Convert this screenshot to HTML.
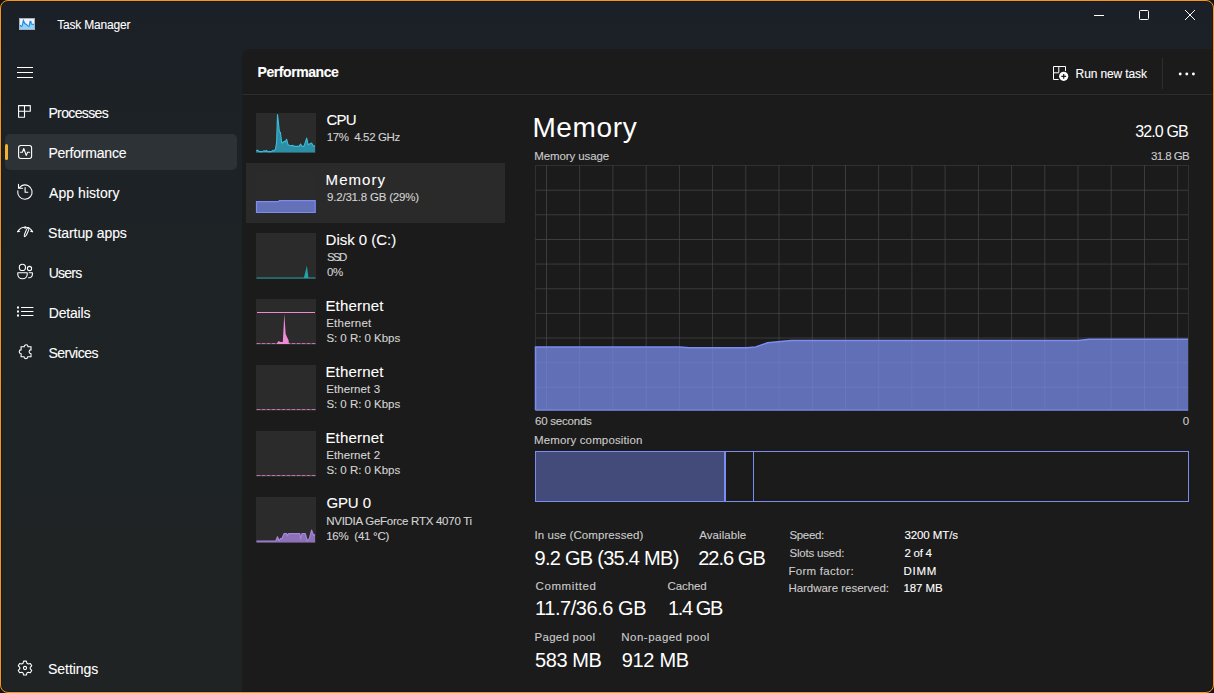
<!DOCTYPE html>
<html><head><meta charset="utf-8">
<style>
html,body{margin:0;padding:0;width:1214px;height:693px;overflow:hidden;background:#141414;}
*{box-sizing:border-box;}
body{font-family:"Liberation Sans",sans-serif;color:#fff;position:relative;}
.abs{position:absolute;}
.t{position:absolute;white-space:nowrap;line-height:1;-webkit-text-stroke:0.1px currentColor;}
svg{position:absolute;left:0;top:0;}
</style></head><body>
<div class="abs" style="left:0;top:0;width:1214px;height:693px;background:linear-gradient(180deg,#1b2028 0%,#1c2127 8%,#1d2226 20%,#1e2325 60%,#1f2324 100%);border-radius:8px;overflow:hidden">
  <div class="abs" style="left:242px;top:49px;width:972px;height:644px;background:#1b1b1b;border-top-left-radius:8px"></div>
</div>
<!-- sidebar selection -->
<div class="abs" style="left:5px;top:134px;width:232px;height:36px;background:#2d3236;border-radius:5px"></div>
<div class="abs" style="left:5px;top:144px;width:3px;height:16px;background:#f1b22f;border-radius:1.5px"></div>
<!-- header separator -->
<div class="abs" style="left:242px;top:94px;width:972px;height:1px;background:#2b2e31"></div>
<div class="abs" style="left:1162px;top:58px;width:1px;height:31px;background:#2e2e2e"></div>
<!-- perf list selected -->
<div class="abs" style="left:246px;top:163px;width:259px;height:60px;background:#2a2a2a"></div>
<!-- thumbs -->
<div class="abs" style="left:256px;top:113px;width:60px;height:40px;background:#2b2b2b"></div>
<div class="abs" style="left:256px;top:173px;width:60px;height:40px;background:#2b2b2b"></div>
<div class="abs" style="left:256px;top:233px;width:60px;height:46px;background:#2b2b2b"></div>
<div class="abs" style="left:256px;top:299px;width:60px;height:46px;background:#2b2b2b"></div>
<div class="abs" style="left:256px;top:365px;width:60px;height:46px;background:#2b2b2b"></div>
<div class="abs" style="left:256px;top:431px;width:60px;height:46px;background:#2b2b2b"></div>
<div class="abs" style="left:256px;top:497px;width:60px;height:46px;background:#2b2b2b"></div>

<svg width="1214" height="693" viewBox="0 0 1214 693">
  <!-- thumbs graphs -->
  <polygon points="256.2,152.5 256.2,150.6 257.5,150.3 259.6,151.6 262.4,151.6 264.1,150.6 265.5,151.5 266.5,150.5 267.9,151.6 271.4,151.6 272.8,150.3 273.8,151.2 275.5,149.2 276.6,142.6 277.5,114.6 278.7,125.3 279.4,131.9 280.4,132.2 281.8,143.3 284.5,141.2 285.2,141.9 286.6,139.2 288.0,144.7 290.8,145.7 292.9,145.4 294.9,146.4 299.1,146.4 300.5,144.0 301.9,146.1 303.9,146.4 306.7,138.1 308.1,144.7 311.6,143.0 313.3,146.1 315.0,145.7 315.0,152.5" fill="#2c8fa6"/><polyline points="256.2,150.6 257.5,150.3 259.6,151.6 262.4,151.6 264.1,150.6 265.5,151.5 266.5,150.5 267.9,151.6 271.4,151.6 272.8,150.3 273.8,151.2 275.5,149.2 276.6,142.6 277.5,114.6 278.7,125.3 279.4,131.9 280.4,132.2 281.8,143.3 284.5,141.2 285.2,141.9 286.6,139.2 288.0,144.7 290.8,145.7 292.9,145.4 294.9,146.4 299.1,146.4 300.5,144.0 301.9,146.1 303.9,146.4 306.7,138.1 308.1,144.7 311.6,143.0 313.3,146.1 315.0,145.7" fill="none" stroke="#3bbcd9" stroke-width="1.1" stroke-linejoin="round"/>
  <polygon points="256.5,212.5 256.5,201.7 278.3,201.7 279.3,200.7 315.2,200.7 315.2,212.5" fill="#6470b8" stroke="#7b8df2" stroke-width="1.2"/>
  <line x1="256.5" y1="278" x2="315.5" y2="278" stroke="#23a3a8" stroke-width="1"/>
  <polygon points="303.8,278 306.9,265.8 308.5,278" fill="#23a3a8"/>
  <line x1="257" y1="312.5" x2="315" y2="312.5" stroke="#ef8ad6" stroke-width="1.2"/>
  <line x1="256.5" y1="343.5" x2="315.5" y2="343.5" stroke="#ef8ad6" stroke-width="1" stroke-dasharray="4 1" opacity="0.75"/>
  <polygon points="276.5,344 278.5,341 280.5,342 282.8,342 284.3,313.9 285.7,334 287.2,337.6 288.5,340 289,344" fill="#ef8ad6"/>
  <line x1="256.5" y1="409.5" x2="315.5" y2="409.5" stroke="#ef8ad6" stroke-width="1" stroke-dasharray="4 1" opacity="0.75"/>
  <line x1="256.5" y1="475.5" x2="315.5" y2="475.5" stroke="#ef8ad6" stroke-width="1" stroke-dasharray="4 1" opacity="0.75"/>
  <polygon points="256.5,542.5 256.5,541.0 275.8,541.0 277.5,536.8 279.0,541.0 280.5,538.7 281.8,538.7 284.0,533.7 286.7,533.7 287.5,536.0 288.5,533.7 299.9,533.7 300.6,539.0 302.0,533.7 305.3,533.7 307.3,541.0 309.5,538.0 311.6,530.2 313.6,535.5 315.0,534.5 315.0,542.5" fill="#8d70b8"/><polyline points="256.5,541.0 275.8,541.0 277.5,536.8 279.0,541.0 280.5,538.7 281.8,538.7 284.0,533.7 286.7,533.7 287.5,536.0 288.5,533.7 299.9,533.7 300.6,539.0 302.0,533.7 305.3,533.7 307.3,541.0 309.5,538.0 311.6,530.2 313.6,535.5 315.0,534.5" fill="none" stroke="#a485d8" stroke-width="1.2" stroke-linejoin="round"/>

  <!-- main graph -->
  <g stroke="#303030" stroke-width="1"><line x1="546.5" y1="165" x2="546.5" y2="410" /><line x1="579.7" y1="165" x2="579.7" y2="410" /><line x1="612.9" y1="165" x2="612.9" y2="410" /><line x1="646.2" y1="165" x2="646.2" y2="410" /><line x1="679.4" y1="165" x2="679.4" y2="410" /><line x1="712.6" y1="165" x2="712.6" y2="410" /><line x1="745.8" y1="165" x2="745.8" y2="410" /><line x1="779.0" y1="165" x2="779.0" y2="410" /><line x1="812.3" y1="165" x2="812.3" y2="410" /><line x1="845.5" y1="165" x2="845.5" y2="410" /><line x1="878.7" y1="165" x2="878.7" y2="410" /><line x1="911.9" y1="165" x2="911.9" y2="410" /><line x1="945.1" y1="165" x2="945.1" y2="410" /><line x1="978.4" y1="165" x2="978.4" y2="410" /><line x1="1011.6" y1="165" x2="1011.6" y2="410" /><line x1="1044.8" y1="165" x2="1044.8" y2="410" /><line x1="1078.0" y1="165" x2="1078.0" y2="410" /><line x1="1111.2" y1="165" x2="1111.2" y2="410" /><line x1="1144.5" y1="165" x2="1144.5" y2="410" /><line x1="1177.7" y1="165" x2="1177.7" y2="410" /><line x1="535" y1="190.2" x2="1188" y2="190.2" /><line x1="535" y1="214.8" x2="1188" y2="214.8" /><line x1="535" y1="239.5" x2="1188" y2="239.5" /><line x1="535" y1="264.1" x2="1188" y2="264.1" /><line x1="535" y1="288.8" x2="1188" y2="288.8" /><line x1="535" y1="313.4" x2="1188" y2="313.4" /><line x1="535" y1="338.0" x2="1188" y2="338.0" /><line x1="535" y1="362.7" x2="1188" y2="362.7" /><line x1="535" y1="387.3" x2="1188" y2="387.3" /></g>
  <rect x="535.5" y="165.5" width="653" height="245" fill="none" stroke="#303030" stroke-width="1"/>
  <polygon points="535.5,410.5 535.5,346.9 679.3,346.9 689.0,347.7 746.8,347.7 755.7,347.0 767.5,342.8 791.2,340.5 1078.2,340.5 1088.8,339.2 1188.0,339.2 1188,410.5" fill="#616fb6"/>
  <g stroke="#ffffff" stroke-opacity="0.06" stroke-width="1"><line x1="546.5" y1="165" x2="546.5" y2="410" /><line x1="579.7" y1="165" x2="579.7" y2="410" /><line x1="612.9" y1="165" x2="612.9" y2="410" /><line x1="646.2" y1="165" x2="646.2" y2="410" /><line x1="679.4" y1="165" x2="679.4" y2="410" /><line x1="712.6" y1="165" x2="712.6" y2="410" /><line x1="745.8" y1="165" x2="745.8" y2="410" /><line x1="779.0" y1="165" x2="779.0" y2="410" /><line x1="812.3" y1="165" x2="812.3" y2="410" /><line x1="845.5" y1="165" x2="845.5" y2="410" /><line x1="878.7" y1="165" x2="878.7" y2="410" /><line x1="911.9" y1="165" x2="911.9" y2="410" /><line x1="945.1" y1="165" x2="945.1" y2="410" /><line x1="978.4" y1="165" x2="978.4" y2="410" /><line x1="1011.6" y1="165" x2="1011.6" y2="410" /><line x1="1044.8" y1="165" x2="1044.8" y2="410" /><line x1="1078.0" y1="165" x2="1078.0" y2="410" /><line x1="1111.2" y1="165" x2="1111.2" y2="410" /><line x1="1144.5" y1="165" x2="1144.5" y2="410" /><line x1="1177.7" y1="165" x2="1177.7" y2="410" /><line x1="535" y1="190.2" x2="1188" y2="190.2" /><line x1="535" y1="214.8" x2="1188" y2="214.8" /><line x1="535" y1="239.5" x2="1188" y2="239.5" /><line x1="535" y1="264.1" x2="1188" y2="264.1" /><line x1="535" y1="288.8" x2="1188" y2="288.8" /><line x1="535" y1="313.4" x2="1188" y2="313.4" /><line x1="535" y1="338.0" x2="1188" y2="338.0" /><line x1="535" y1="362.7" x2="1188" y2="362.7" /><line x1="535" y1="387.3" x2="1188" y2="387.3" /></g>
  <polyline points="535.5,410 535.5,346.9 679.3,346.9 689.0,347.7 746.8,347.7 755.7,347.0 767.5,342.8 791.2,340.5 1078.2,340.5 1088.8,339.2 1188.0,339.2" fill="none" stroke="#7b8df2" stroke-width="1.5"/>
  <line x1="535.5" y1="410" x2="1188" y2="410" stroke="#7b8df2" stroke-width="1.2"/>

  <!-- composition -->
  <rect x="535.5" y="451.5" width="653" height="50" fill="none" stroke="#7b8df2" stroke-width="1"/>
  <rect x="536" y="452" width="188" height="49" fill="#434b7a"/>
  <line x1="725" y1="451.5" x2="725" y2="501.5" stroke="#7b8df2" stroke-width="2"/>
  <line x1="753.5" y1="451.5" x2="753.5" y2="501.5" stroke="#7b8df2" stroke-width="1"/>

  <!-- title icon -->
  <rect x="19.5" y="18.5" width="15" height="11" fill="#eef2f7" stroke="#a9b2bb" stroke-width="1"/>
  <polygon points="20,29 20,25.2 21.2,26.4 22.1,26.1 23.4,20.5 24.8,23.5 26.5,24.4 28,26.1 29.1,26.3 30.1,21.4 30.9,21.5 31.3,24.1 34,24.4 34,29" fill="#8fd3fb"/>
  <polyline points="20,25.2 21.2,26.4 22.1,26.1 23.4,20.5 24.8,23.5 26.5,24.4 28,26.1 29.1,26.3 30.1,21.4 30.9,21.5 31.3,24.1 34,24.4" fill="none" stroke="#1c86de" stroke-width="1.1"/>

  <!-- window controls -->
  <line x1="1094" y1="15.5" x2="1104" y2="15.5" stroke="#fff" stroke-width="1"/>
  <rect x="1139.5" y="10.5" width="9" height="9" rx="1" fill="none" stroke="#fff" stroke-width="1"/>
  <path d="M1185 10 L1195 20 M1195 10 L1185 20" stroke="#fff" stroke-width="1"/>

  <!-- hamburger -->
  <path d="M17 67.5 H33 M17 72.5 H33 M17 77.5 H33" stroke="#fff" stroke-width="1"/>

  <g fill="none" stroke="#fff" stroke-width="1.1" stroke-linejoin="round" stroke-linecap="round">
    <!-- processes -->
    <path d="M18.6 105.6 H30.3 V111.3 H18.6 M18.6 105.6 V117.2 H24.5 V105.6"/>
    <!-- performance -->
    <rect x="18.6" y="145.5" width="13" height="13" rx="2.2"/>
    <path d="M20.5 152.3 H22.4 L23.8 148.5 L26.2 155.4 L27.6 152.3 H29.6"/>
    <!-- app history -->
    <path d="M17.8 190.85 A7.2 7.2 0 1 0 22.2 185.4"/>
    <path stroke-linejoin="miter" d="M18.5 184.4 V188.3 H22.6 M18.7 188.1 L22.4 185.3"/>
    <path d="M25.1 187.6 V192.3 H27.8"/>
    <!-- startup apps -->
    <path d="M17.6 231.8 A8.4 8.4 0 0 1 32.6 231.8"/>
    <path d="M17.8 231.6 L19.6 231.2 M32.4 231.6 L30.6 231.2 M25.1 226.6 V228.6"/>
    <ellipse cx="26.6" cy="232.1" rx="1.1" ry="4.9" transform="rotate(24 26.6 232.1)"/>
    <!-- users -->
    <circle cx="22.4" cy="267.4" r="3.1"/>
    <circle cx="29.5" cy="268.5" r="2.1"/>
    <path d="M17.8 272.8 H27.2 V274.5 A4.7 4.2 0 0 1 17.8 274.5 Z"/>
    <path d="M29.2 272.8 H32.4 V274.5 A3.6 3.6 0 0 1 28.6 277.8"/>
    <!-- details -->
    <path d="M21.5 307.5 H33 M21.5 311.5 H33 M21.5 315.5 H33"/>
    <!-- services -->
    <path stroke-linejoin="miter" stroke-linecap="butt" d="M21.1 346.7 H24.2 A1.9 1.9 0 0 1 28 346.7 H31 V349.9 A1.9 1.9 0 0 0 31 353.7 V356.7 H27.8 A1.9 1.9 0 0 1 24 356.7 H21.1 V353.7 A1.9 1.9 0 0 1 21.1 349.9 Z"/>
    <!-- settings -->
    <path d="M23.10 663.15 L23.65 661.13 L26.35 661.13 L26.90 663.15 L28.34 663.98 L30.36 663.44 L31.71 665.79 L30.23 667.27 L30.23 668.93 L31.71 670.41 L30.36 672.76 L28.34 672.22 L26.90 673.05 L26.35 675.07 L23.65 675.07 L23.10 673.05 L21.66 672.22 L19.64 672.76 L18.29 670.41 L19.77 668.93 L19.77 667.27 L18.29 665.79 L19.64 663.44 L21.66 663.98 Z"/>
    <circle cx="25" cy="668" r="1.6"/>
  </g>
  <g fill="#fff">
    <rect x="17" y="306.5" width="2" height="2"/><rect x="17" y="310.5" width="2" height="2"/><rect x="17" y="314.5" width="2" height="2"/>
    <circle cx="1180.2" cy="74" r="1.45"/><circle cx="1186.8" cy="74" r="1.45"/><circle cx="1193.4" cy="74" r="1.45"/>
  </g>
  <!-- run new task icon -->
  <g fill="none" stroke="#fff" stroke-width="1">
    <path d="M1053.5 66.5 H1065.5 V71.3 M1053.5 66.5 V79.5 H1058.6 M1053.5 72.8 H1058.8 M1058.8 66.5 V72.8"/>
  </g>
  <circle cx="1063.7" cy="76.3" r="5.6" fill="#1b1b1b"/><circle cx="1063.7" cy="76.3" r="4.6" fill="#fff"/>
  <path d="M1063.7 73.9 V78.7 M1061.3 76.3 H1066.1" stroke="#1b1b1b" stroke-width="1.2"/>
</svg>
<div class="t" style="left:57.3px;top:19.0px;font-size:12px;letter-spacing:-0.2px;color:#ffffff;">Task Manager</div>
<div class="t" style="left:48.4px;top:106.0px;font-size:14px;letter-spacing:-0.625px;color:#ffffff;">Processes</div>
<div class="t" style="left:48.4px;top:146.0px;font-size:14px;letter-spacing:-0.2px;color:#ffffff;">Performance</div>
<div class="t" style="left:49.1px;top:186.0px;font-size:14px;letter-spacing:0.04px;color:#ffffff;">App history</div>
<div class="t" style="left:48.1px;top:226.0px;font-size:14px;letter-spacing:-0.055px;color:#ffffff;">Startup apps</div>
<div class="t" style="left:48.7px;top:266.0px;font-size:14px;letter-spacing:-0.75px;color:#ffffff;">Users</div>
<div class="t" style="left:48.7px;top:306.0px;font-size:14px;letter-spacing:-0.167px;color:#ffffff;">Details</div>
<div class="t" style="left:48.5px;top:346.0px;font-size:14px;letter-spacing:-0.543px;color:#ffffff;">Services</div>
<div class="t" style="left:48.1px;top:662.0px;font-size:14px;letter-spacing:-0.057px;color:#ffffff;">Settings</div>
<div class="t" style="left:257.6px;top:65.0px;font-size:14px;letter-spacing:-0.44px;color:#ffffff;font-weight:700;">Performance</div>
<div class="t" style="left:1075.6px;top:68.0px;font-size:12px;letter-spacing:-0.127px;color:#ffffff;">Run new task</div>
<div class="t" style="left:326.6px;top:112.0px;font-size:15px;letter-spacing:-0.9px;color:#ffffff;">CPU</div>
<div class="t" style="left:326.8px;top:132.0px;font-size:11.5px;letter-spacing:-0.383px;color:#d4d4d4;">17%  4.52 GHz</div>
<div class="t" style="left:325.6px;top:172.0px;font-size:15px;letter-spacing:1.04px;color:#ffffff;">Memory</div>
<div class="t" style="left:327.0px;top:192.0px;font-size:11.5px;letter-spacing:-0.2px;color:#d4d4d4;">9.2/31.8 GB (29%)</div>
<div class="t" style="left:325.6px;top:232.0px;font-size:15px;letter-spacing:-0.02px;color:#ffffff;">Disk 0 (C:)</div>
<div class="t" style="left:327.0px;top:252.0px;font-size:11.5px;letter-spacing:-1.7px;color:#d4d4d4;">SSD</div>
<div class="t" style="left:327.0px;top:267.0px;font-size:11.5px;letter-spacing:-0.4px;color:#d4d4d4;">0%</div>
<div class="t" style="left:325.4px;top:298.0px;font-size:15px;letter-spacing:0.2px;color:#ffffff;">Ethernet</div>
<div class="t" style="left:326.2px;top:318.0px;font-size:11.5px;letter-spacing:0.229px;color:#d4d4d4;">Ethernet</div>
<div class="t" style="left:326.4px;top:333.0px;font-size:11.5px;letter-spacing:-0.031px;color:#d4d4d4;">S: 0 R: 0 Kbps</div>
<div class="t" style="left:325.4px;top:364.0px;font-size:15px;letter-spacing:0.2px;color:#ffffff;">Ethernet</div>
<div class="t" style="left:326.2px;top:384.0px;font-size:11.5px;letter-spacing:0.089px;color:#d4d4d4;">Ethernet 3</div>
<div class="t" style="left:326.4px;top:399.0px;font-size:11.5px;letter-spacing:-0.031px;color:#d4d4d4;">S: 0 R: 0 Kbps</div>
<div class="t" style="left:325.4px;top:430.0px;font-size:15px;letter-spacing:0.2px;color:#ffffff;">Ethernet</div>
<div class="t" style="left:326.2px;top:450.0px;font-size:11.5px;letter-spacing:0.089px;color:#d4d4d4;">Ethernet 2</div>
<div class="t" style="left:326.4px;top:465.0px;font-size:11.5px;letter-spacing:-0.031px;color:#d4d4d4;">S: 0 R: 0 Kbps</div>
<div class="t" style="left:326.4px;top:495.0px;font-size:15px;letter-spacing:-0.1px;color:#ffffff;">GPU 0</div>
<div class="t" style="left:326.2px;top:516.0px;font-size:11.5px;letter-spacing:-0.264px;color:#d4d4d4;">NVIDIA GeForce RTX 4070 Ti</div>
<div class="t" style="left:326.2px;top:531.0px;font-size:11.5px;letter-spacing:-0.255px;color:#d4d4d4;">16%  (41 °C)</div>
<div class="t" style="left:532.4px;top:114.0px;font-size:28px;letter-spacing:0.64px;color:#ffffff;-webkit-text-stroke:0;">Memory</div>
<div class="t" style="left:1135.3px;top:124.0px;font-size:16px;letter-spacing:-0.9px;color:#ffffff;-webkit-text-stroke:0;">32.0 GB</div>
<div class="t" style="left:534.3px;top:151.0px;font-size:11.5px;letter-spacing:-0.109px;color:#cccccc;">Memory usage</div>
<div class="t" style="left:1151.0px;top:151.0px;font-size:11.5px;letter-spacing:-0.567px;color:#cccccc;">31.8 GB</div>
<div class="t" style="left:535.0px;top:416.4px;font-size:11.5px;letter-spacing:-0.222px;color:#cccccc;">60 seconds</div>
<div class="t" style="left:1182.8px;top:416.4px;font-size:11.5px;letter-spacing:-0.8px;color:#cccccc;">0</div>
<div class="t" style="left:534.0px;top:435.4px;font-size:11.5px;letter-spacing:0.141px;color:#cccccc;">Memory composition</div>
<div class="t" style="left:534.5px;top:530.0px;font-size:11.5px;letter-spacing:0.078px;color:#cccccc;">In use (Compressed)</div>
<div class="t" style="left:534.5px;top:548.0px;font-size:20px;letter-spacing:-0.72px;color:#ffffff;-webkit-text-stroke:0;">9.2 GB (35.4 MB)</div>
<div class="t" style="left:699.2px;top:530.0px;font-size:11.5px;letter-spacing:0.075px;color:#cccccc;">Available</div>
<div class="t" style="left:698.2px;top:548.0px;font-size:20px;letter-spacing:-0.967px;color:#ffffff;-webkit-text-stroke:0;">22.6 GB</div>
<div class="t" style="left:535.6px;top:581.0px;font-size:11.5px;letter-spacing:0.575px;color:#cccccc;">Committed</div>
<div class="t" style="left:535.0px;top:598.0px;font-size:20px;letter-spacing:-0.436px;color:#ffffff;-webkit-text-stroke:0;">11.7/36.6 GB</div>
<div class="t" style="left:667.6px;top:581.0px;font-size:11.5px;letter-spacing:-0.12px;color:#cccccc;">Cached</div>
<div class="t" style="left:668.0px;top:598.0px;font-size:20px;letter-spacing:-1.4px;color:#ffffff;-webkit-text-stroke:0;">1.4 GB</div>
<div class="t" style="left:534.6px;top:632.0px;font-size:11.5px;letter-spacing:0.244px;color:#cccccc;">Paged pool</div>
<div class="t" style="left:535.0px;top:649.5px;font-size:20px;letter-spacing:-0.4px;color:#ffffff;-webkit-text-stroke:0;">583 MB</div>
<div class="t" style="left:621.3px;top:632.0px;font-size:11.5px;letter-spacing:0.477px;color:#cccccc;">Non-paged pool</div>
<div class="t" style="left:621.7px;top:649.5px;font-size:20px;letter-spacing:-0.28px;color:#ffffff;-webkit-text-stroke:0;">912 MB</div>
<div class="t" style="left:789.4px;top:530.0px;font-size:11.5px;letter-spacing:-0.32px;color:#cccccc;">Speed:</div>
<div class="t" style="left:789.4px;top:547.5px;font-size:11.5px;letter-spacing:-0.18px;color:#cccccc;">Slots used:</div>
<div class="t" style="left:788.4px;top:565.7px;font-size:11.5px;letter-spacing:0.291px;color:#cccccc;">Form factor:</div>
<div class="t" style="left:788.4px;top:583.4px;font-size:11.5px;letter-spacing:-0.024px;color:#cccccc;">Hardware reserved:</div>
<div class="t" style="left:904.4px;top:530.0px;font-size:11.5px;letter-spacing:-0.075px;color:#ffffff;">3200 MT/s</div>
<div class="t" style="left:904.4px;top:547.5px;font-size:11.5px;letter-spacing:-0.24px;color:#ffffff;">2 of 4</div>
<div class="t" style="left:903.4px;top:565.7px;font-size:11.5px;letter-spacing:0.8px;color:#ffffff;">DIMM</div>
<div class="t" style="left:903.4px;top:583.4px;font-size:11.5px;letter-spacing:-0.08px;color:#ffffff;">187 MB</div>
<!-- window border -->
<div class="abs" style="left:0;top:0;width:1214px;height:693px;border:1px solid #fa9610;border-radius:8px;box-shadow:inset 0 0 0 1px rgba(10,20,35,0.5)"></div>
</body></html>
